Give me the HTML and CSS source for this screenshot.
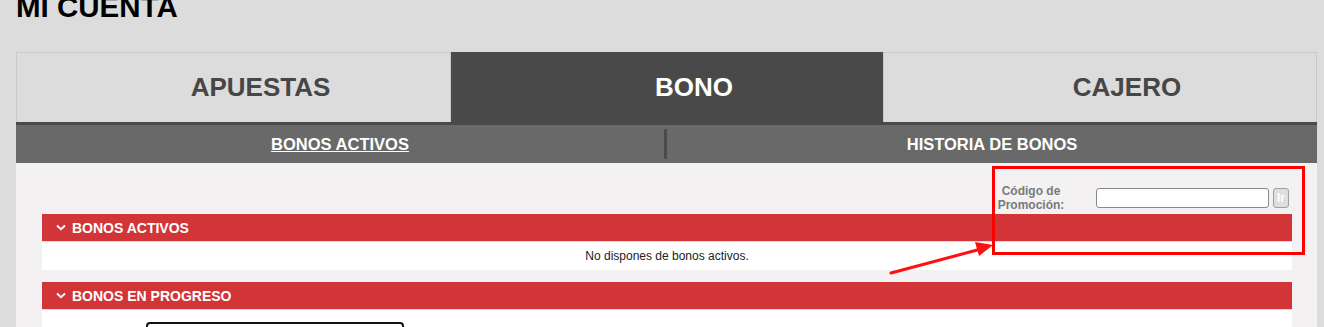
FILE: index.html
```html
<!DOCTYPE html>
<html lang="es">
<head>
<meta charset="utf-8">
<title>Mi cuenta</title>
<link rel="stylesheet" href="styles.css">
</head>
<body>
<div class="page">
  <div class="header"><h1 class="title">MI CUENTA</h1></div>
  <nav class="tabs">
    <div class="tab">APUESTAS</div>
    <div class="tab tab-active">BONO</div>
    <div class="tab">CAJERO</div>
  </nav>
  <div class="tabs-line"></div>
  <div class="subnav">
    <div class="subnav-item subnav-current">BONOS ACTIVOS</div>
    <div class="subnav-divider"></div>
    <div class="subnav-item">HISTORIA DE BONOS</div>
  </div>
  <div class="panel">
    <div class="promo">
      <label class="promo-label" for="promo">Código de Promoción:</label>
      <input class="promo-input" id="promo" type="text">
      <button class="promo-btn" type="button">Ir</button>
    </div>
    <section class="section">
      <div class="section-head">
        <svg class="chev" width="10" height="7" viewBox="0 0 10 7"><path d="M1 1.5 L5 5.2 L9 1.5" fill="none" stroke="#fff" stroke-width="1.8"/></svg>
        <span>BONOS ACTIVOS</span>
      </div>
      <div class="section-body">No dispones de bonos activos.</div>
    </section>
    <section class="section section-progress">
      <div class="section-head">
        <svg class="chev" width="10" height="7" viewBox="0 0 10 7"><path d="M1 1.5 L5 5.2 L9 1.5" fill="none" stroke="#fff" stroke-width="1.8"/></svg>
        <span>BONOS EN PROGRESO</span>
      </div>
      <div class="section-body section-body-progress">
        <div class="progress-box"></div>
      </div>
    </section>
  </div>
</div>
<div class="annot-box"></div>
<svg class="annot-arrow" width="120" height="40" viewBox="0 0 120 40">
  <line x1="2" y1="36" x2="92" y2="12" stroke="#ff1010" stroke-width="3" stroke-linecap="round"/>
  <polygon points="104,8 86,5 90,19" fill="#ff1010"/>
</svg>
</body>
</html>
```

FILE: styles.css
```css
html, body {
  margin: 0;
  padding: 0;
  background: #dcdcdc;
  font-family: "Liberation Sans", Arial, sans-serif;
  overflow: hidden;
}

.page {
  padding: 0 7px 0 16px;
}

.header {
  display: flow-root;
  height: 52px;
}

.title {
  margin: -8px 0 0 0;
  font-size: 29.5px;
  line-height: 30px;
  font-weight: bold;
  color: #000;
}

.tabs {
  display: grid;
  grid-template-columns: 435px 432px 1fr;
  height: 70px;
}

.tab {
  display: flex;
  align-items: center;
  justify-content: center;
  padding-left: 54px;
  font-size: 26px;
  font-weight: bold;
  color: #464646;
  background: #dcdcdc;
  border: 1px solid #c9c9c9;
  border-bottom: none;
}

.tab-active {
  background: #494949;
  color: #fff;
  border-color: #494949;
}

.tabs-line {
  height: 3px;
  background: #494949;
}

.subnav {
  display: grid;
  grid-template-columns: 648px 3px 1fr;
  align-items: center;
  height: 38px;
  background: #696969;
}

.subnav-item {
  text-align: center;
  color: #fff;
  font-size: 16.5px;
  font-weight: bold;
}

.subnav-current {
  text-decoration: underline;
}

.subnav-divider {
  height: 30px;
  background: #4a4a4a;
}

.panel {
  background: #f3f1f2;
  padding: 0 25px 0 26px;
  height: 200px;
}

.promo {
  display: flex;
  justify-content: flex-end;
  align-items: center;
  padding: 21px 3px 2px 0;
}

.promo-label {
  width: 80px;
  margin-right: 25px;
  text-align: center;
  font-size: 12px;
  line-height: 14px;
  font-weight: bold;
  color: #7a7a7a;
}

.promo-input {
  box-sizing: border-box;
  width: 173px;
  height: 20px;
  margin: 0 4px 0 0;
  padding: 0 4px;
  border: 1px solid #8a8a8a;
  border-radius: 3px;
  background: #fff;
}

.promo-btn {
  box-sizing: border-box;
  width: 16px;
  height: 20px;
  margin: 0;
  padding: 0;
  border: 1px solid #a0a0a0;
  border-radius: 3px;
  background: #dedede;
  color: #fff;
  font-family: "Liberation Sans", Arial, sans-serif;
  font-size: 12px;
  font-weight: bold;
}

.section-head {
  display: flex;
  align-items: center;
  height: 27px;
  padding-left: 14px;
  background: #d13537;
  border-bottom: 1px solid #e4d8de;
  color: #fff;
  font-size: 14px;
  font-weight: bold;
}

.chev {
  margin-right: 6px;
}

.section-body {
  height: 28px;
  background: #fff;
  display: flex;
  align-items: center;
  justify-content: center;
  font-size: 12px;
  color: #222;
}

.section-progress {
  margin-top: 12px;
}

.section-body-progress {
  height: 40px;
  display: block;
  padding-top: 12px;
  box-sizing: border-box;
}

.progress-box {
  margin-left: 104px;
  width: 258px;
  height: 30px;
  box-sizing: border-box;
  border: 2px solid #111;
  border-radius: 4px;
}

.annot-box {
  position: absolute;
  left: 992px;
  top: 166px;
  width: 313px;
  height: 89px;
  box-sizing: border-box;
  border: 3px solid #ff0000;
}

.annot-arrow {
  position: absolute;
  left: 889px;
  top: 237px;
}
```
